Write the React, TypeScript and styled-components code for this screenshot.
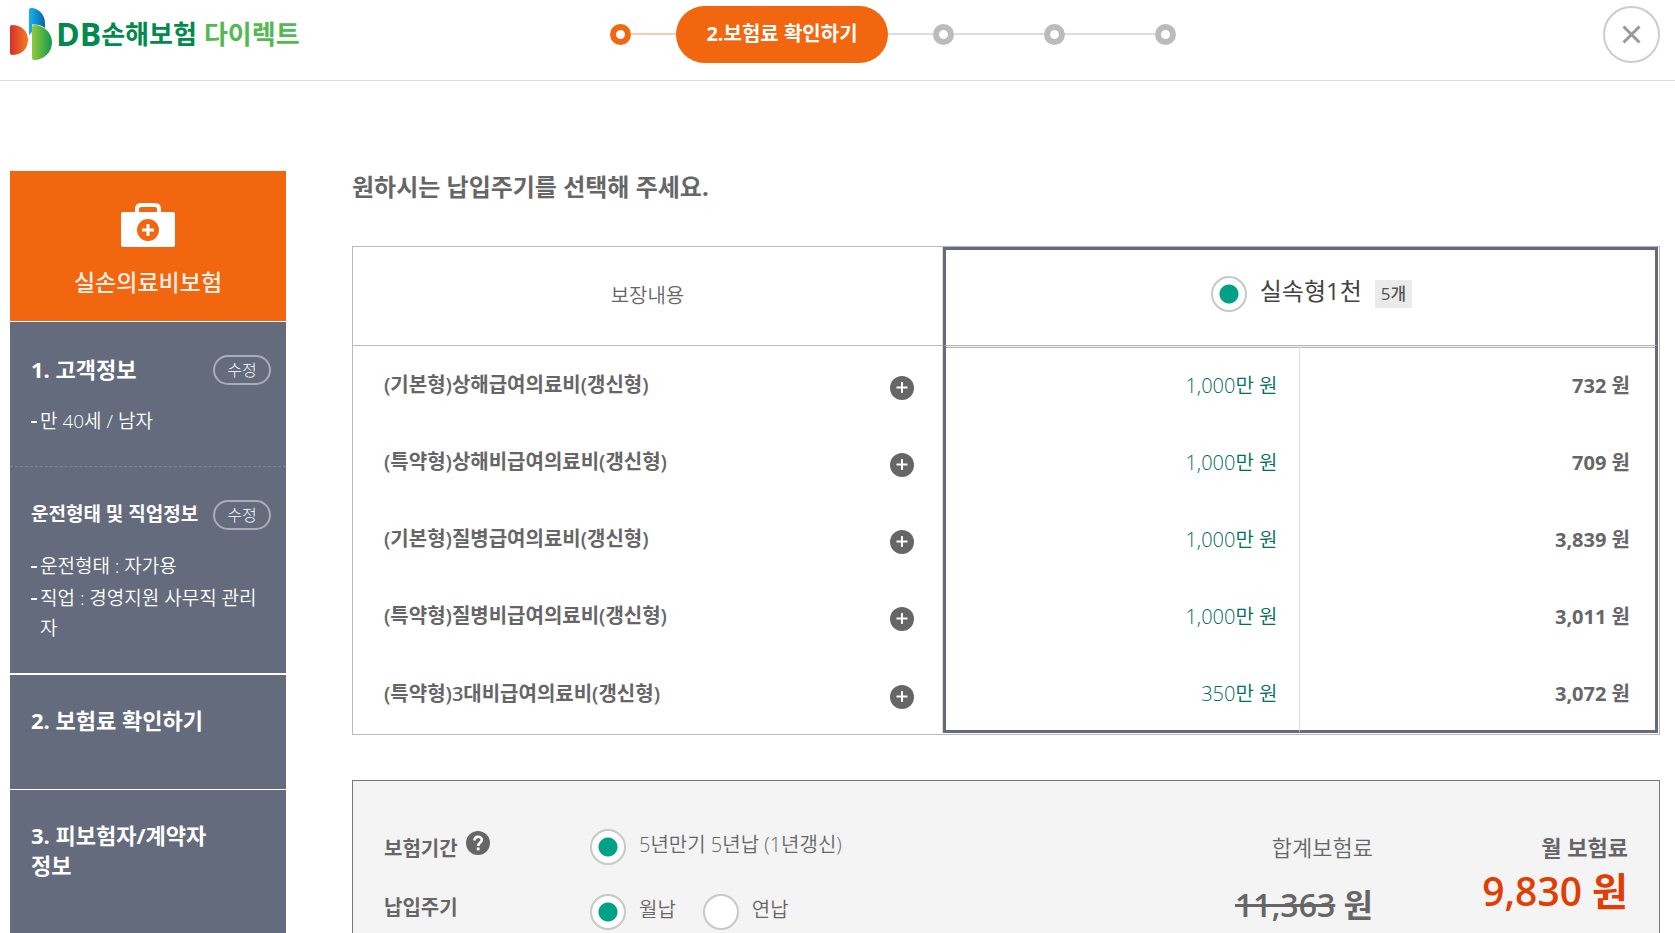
import React from "react";
import styled, { createGlobalStyle, css } from "styled-components";

const color = {
  orange: "#f1660f",
  slate: "#636b7d",
  text: "#666",
  line: "#b9b9b9",
  lightLine: "#ddd",
  green: "#00a185",
};

const GlobalStyle = createGlobalStyle`
  *, *::before, *::after { box-sizing: border-box; }
  html { scrollbar-width: none; }
  body {
    margin: 0;
    background: #fff;
    color: ${color.text};
    font-family: "Open Sans", "Noto Sans CJK KR", sans-serif;
    font-size: 20px;
    line-height: 30px;
  }
  h1, h2, h3, p, ul, ol { margin: 0; padding: 0; }
  ul, ol { list-style: none; }
  button { font-family: inherit; cursor: pointer; }
`;

const Header = styled.header`
  display: flex;
  align-items: center;
  height: 81px;
  padding: 0 15px 12px 10px;
  border-bottom: 1px solid ${color.lightLine};
`;

const Logo = styled.a`
  display: flex;
  align-items: center;
  flex: 0 0 600px;
  color: #008a4b;
  font-size: 26px;
  font-weight: 700;
  text-decoration: none;
  svg { margin-right: 3px; }
`;

const LogoInitials = styled.span`
  font-size: 32px;
`;

const LogoDirect = styled.span`
  margin-left: 7px;
  color: #53b951;
`;

const Steps = styled.ol`
  display: flex;
  align-items: center;
`;

const StepLine = styled.li<{ $long?: boolean; $done?: boolean }>`
  width: ${(p) => (p.$long ? 90 : 45)}px;
  height: 2px;
  background: ${(p) => (p.$done ? "#ffcaa8" : color.lightLine)};
`;

const StepDot = styled.li<{ $done?: boolean }>`
  width: 21px;
  height: 21px;
  border: 6px solid ${(p) => (p.$done ? color.orange : "#bbb")};
  border-radius: 50%;
`;

const StepCurrent = styled.li`
  width: 212px;
  height: 57px;
  border-radius: 29px;
  background: ${color.orange};
  color: #fff;
  font-weight: 700;
  line-height: 56px;
  text-align: center;
`;

const CloseButton = styled.button`
  display: grid;
  place-items: center;
  width: 57px;
  height: 57px;
  margin-left: auto;
  padding: 0;
  border: 2px solid #ccc;
  border-radius: 50%;
  background: #fff;
`;

const Page = styled.div`
  display: flex;
  align-items: flex-start;
  gap: 66px;
  padding: 90px 15px 0 10px;
`;

const Sidebar = styled.aside`
  flex: 0 0 276px;
  color: #fff;
`;

const Product = styled.div`
  display: flex;
  flex-direction: column;
  align-items: center;
  gap: 20px;
  height: 150px;
  padding-top: 32px;
  background: ${color.orange};
  color: #fff0e6;
  font-size: 23px;
  font-weight: 500;
`;

const SideBlock = styled.section<{ $gap?: number; $height: number; $dashed?: boolean }>`
  min-height: ${(p) => p.$height}px;
  margin-top: ${(p) => p.$gap ?? 0}px;
  padding: 30px 15px 0 21px;
  background: ${color.slate};
  ${(p) => p.$dashed && css`border-top: 1px dashed #7f8797;`}
`;

const SideHead = styled.div`
  display: flex;
  align-items: center;
  justify-content: space-between;
  padding-top: 2px;
`;

const SideTitle = styled.h2<{ $small?: boolean }>`
  padding-bottom: 2px;
  font-size: ${(p) => (p.$small ? 19 : 22)}px;
  font-weight: 700;
`;

const StepTitle = styled(SideTitle)`
  padding-right: 50px;
`;

const EditButton = styled.button`
  width: 58px;
  height: 30px;
  padding: 0;
  border: 2px solid #a9adb6;
  border-radius: 15px;
  background: transparent;
  color: #fff;
  font-size: 16px;
  font-weight: 300;
  line-height: 26px;
`;

const SideList = styled.ul`
  display: grid;
  gap: 2px;
  margin-top: 20px;
  font-size: 19px;
  font-weight: 350;
  li { display: flex; }
  li::before {
    content: "";
    flex: 0 0 6px;
    height: 2px;
    margin: 15px 3px 0 0;
    background: #fff;
  }
`;

const Main = styled.main`
  flex: 1;
  min-width: 0;
`;

const PageTitle = styled.h1`
  margin-bottom: 43px;
  font-size: 24px;
  font-weight: 700;
  line-height: 32px;
`;

const CoverTable = styled.table`
  width: 100%;
  padding: 0 1px 1px 0;
  border: 1px solid ${color.line};
  border-collapse: separate;
  border-spacing: 0;
  table-layout: fixed;
`;

const HeadCell = styled.th<{ $plan?: boolean }>`
  height: 99px;
  padding: 0;
  border-bottom: 1px solid ${color.line};
  font-weight: 350;
  ${(p) =>
    p.$plan
      ? css`
          border-top: 3px solid ${color.slate};
          border-left: 3px solid ${color.slate};
          border-right: 3px solid ${color.slate};
        `
      : css`border-right: 1px solid ${color.lightLine};`}
`;

const rowCell = css`
  height: 77px;
  tr:last-child > & { height: 79px; }
`;

const NameCell = styled.th`
  ${rowCell}
  padding: 0;
  border-right: 1px solid ${color.lightLine};
  font-weight: 600;
  text-align: left;
`;

const NameRow = styled.div`
  display: flex;
  align-items: flex-end;
  justify-content: space-between;
  padding: 0 28px 0 31px;
`;

const planCell = css`
  ${rowCell}
  text-align: right;
  tr:first-child > & { box-shadow: inset 0 1px #eee, inset 0 2px ${color.line}; }
  tr:last-child > & { border-bottom: 3px solid ${color.slate}; }
`;

const AmountCell = styled.td`
  ${planCell}
  padding: 3px 22px 0 0;
  border-left: 3px solid ${color.slate};
  border-right: 1px solid ${color.lightLine};
  color: #006e60;
  font-weight: 350;
`;

const PriceCell = styled.td`
  ${planCell}
  padding: 3px 25px 0 0;
  border-right: 3px solid ${color.slate};
  font-weight: 700;
`;

const IconButton = styled.button`
  display: block;
  width: 24px;
  height: 24px;
  padding: 0;
  border: 0;
  background: none;
  svg { display: block; }
`;

const RadioLabel = styled.label<{ $large?: boolean }>`
  display: flex;
  align-items: center;
  gap: 13px;
  font-weight: 350;
  span { padding-bottom: 5px; }
  ${(p) => p.$large && css`color: #444; font-size: 24px; font-weight: 400;`}
`;

const Radio = styled.input.attrs({ type: "radio" })`
  appearance: none;
  width: 36px;
  height: 36px;
  margin: 0;
  border: 2px solid #c8c8c8;
  border-radius: 50%;
  background: #fff;
  &:checked { background: radial-gradient(circle, ${color.green} 9px, #fff 10px); }
`;

const PlanChoice = styled.div`
  display: flex;
  align-items: center;
  justify-content: center;
  gap: 13px;
  padding: 0 0 8px 22px;
`;

const CountBadge = styled.span`
  padding: 0 6px;
  background: #ebebeb;
  color: #555;
  font-size: 17px;
  font-weight: 500;
  line-height: 28px;
`;

const Summary = styled.section`
  display: flex;
  justify-content: space-between;
  min-height: 240px;
  margin-top: 45px;
  padding: 48px 31px 40px;
  border: 1px solid #777;
  background: #f4f4f4;
`;

const Options = styled.div`
  display: grid;
  gap: 29px;
  align-content: start;
`;

const OptionRow = styled.div`
  display: flex;
`;

const OptionName = styled.div<{ $withHelp?: boolean }>`
  display: flex;
  align-items: flex-start;
  gap: 8px;
  width: 206px;
  padding-top: ${(p) => (p.$withHelp ? 6 : 0)}px;
  font-weight: 600;
  line-height: 28px;
  ${IconButton} { margin-top: -4px; }
`;

const Choices = styled.div`
  display: flex;
  gap: 27px;
`;

const Totals = styled.div`
  display: flex;
  text-align: right;
`;

const Total = styled.div<{ $main?: boolean }>`
  width: ${(p) => (p.$main ? 255 : 180)}px;
  font-size: 22px;
  font-weight: ${(p) => (p.$main ? 600 : 350)};
  line-height: 36px;
`;

const OldPrice = styled.p`
  padding-top: 14px;
  font-size: 32px;
  font-weight: 600;
  line-height: 52px;
  s { text-decoration-thickness: 3px; }
`;

const NewPrice = styled.p`
  color: #e03e04;
  font-size: 39px;
  font-weight: 600;
  line-height: 52px;
`;

function LogoMark() {
  return (
    <svg width="43" height="52" viewBox="0 0 43 52" aria-hidden="true">
      <defs>
        <linearGradient id="red"><stop offset="0" stopColor="#d5302f" /><stop offset="1" stopColor="#f47b20" /></linearGradient>
        <linearGradient id="blue"><stop offset="0" stopColor="#16b4ec" /><stop offset="1" stopColor="#0b62b0" /></linearGradient>
        <linearGradient id="green"><stop offset="0" stopColor="#96c93d" /><stop offset="1" stopColor="#0f9a4c" /></linearGradient>
      </defs>
      <path d="M0 19Q0 17 2 17C11 17 18 23 18 32S11 47 2 47Q0 47 0 45Z" fill="url(#red)" />
      <path d="M19 2Q19 0 21 0C29 0 35 7 35 15V20C32 17.500 28 16 22 16.500V24L19 27Z" fill="url(#blue)" />
      <path d="M22 19Q22 17 24 17C34 17 42 25 42 34.500S34 52 24 52Q22 52 22 50Z" fill="url(#green)" />
    </svg>
  );
}

function MedicalBag() {
  return (
    <svg width="54" height="44" viewBox="0 0 54 44" aria-hidden="true">
      <path d="M16 10V6Q16 2 20 2H34Q38 2 38 6V10" fill="none" stroke="#fff" strokeWidth="4" />
      <rect y="9" width="54" height="35" rx="2" fill="#fff" />
      <circle cx="27" cy="27" r="11" fill={color.orange} />
      <path d="M27 21V33M21 27H33" stroke="#fff" strokeWidth="3" />
    </svg>
  );
}

function PlusIcon() {
  return (
    <svg width="24" height="24" viewBox="0 0 24 24" aria-hidden="true">
      <circle cx="12" cy="12" r="12" fill="#666" />
      <path d="M12 6V17M6.500 11.500H17.500" stroke="#fff" strokeWidth="2" />
    </svg>
  );
}

function HelpIcon() {
  return (
    <svg width="24" height="24" viewBox="0 0 24 24" aria-hidden="true">
      <circle cx="12" cy="12" r="12" fill="#666" />
      <path d="M8.500 9.500C8.500 4.500 15.800 4.700 15.800 9C15.800 11.500 12.200 11.800 12.200 15" fill="none" stroke="#fff" strokeWidth="2.600" />
      <rect x="10.800" y="16.500" width="2.800" height="2.800" fill="#fff" />
    </svg>
  );
}

const covers = [
  { name: "(기본형)상해급여의료비(갱신형)", amount: "1,000만 원", price: "732 원" },
  { name: "(특약형)상해비급여의료비(갱신형)", amount: "1,000만 원", price: "709 원" },
  { name: "(기본형)질병급여의료비(갱신형)", amount: "1,000만 원", price: "3,839 원" },
  { name: "(특약형)질병비급여의료비(갱신형)", amount: "1,000만 원", price: "3,011 원" },
  { name: "(특약형)3대비급여의료비(갱신형)", amount: "350만 원", price: "3,072 원" },
];

export default function App() {
  return (
    <>
      <GlobalStyle />
      <Header>
        <Logo href="#">
          <LogoMark />
          <LogoInitials>DB</LogoInitials>
          <span>손해보험</span>
          <LogoDirect>다이렉트</LogoDirect>
        </Logo>
        <Steps>
          <StepDot $done />
          <StepLine $done />
          <StepCurrent aria-current="step">2.보험료 확인하기</StepCurrent>
          <StepLine />
          <StepDot />
          <StepLine $long />
          <StepDot />
          <StepLine $long />
          <StepDot />
        </Steps>
        <CloseButton aria-label="닫기">
          <svg width="19" height="19" viewBox="0 0 19 19" aria-hidden="true">
            <path d="M1.500 1.500L17.500 17.500M17.500 1.500L1.500 17.500" stroke="#999" strokeWidth="3" />
          </svg>
        </CloseButton>
      </Header>

      <Page>
        <Sidebar>
          <Product>
            <MedicalBag />
            <span>실손의료비보험</span>
          </Product>
          <SideBlock $gap={1} $height={144}>
            <SideHead>
              <SideTitle>1. 고객정보</SideTitle>
              <EditButton>수정</EditButton>
            </SideHead>
            <SideList>
              <li>만 40세 / 남자</li>
            </SideList>
          </SideBlock>
          <SideBlock $height={207} $dashed>
            <SideHead>
              <SideTitle $small>운전형태 및 직업정보</SideTitle>
              <EditButton>수정</EditButton>
            </SideHead>
            <SideList>
              <li>운전형태 : 자가용</li>
              <li>직업 : 경영지원 사무직 관리자</li>
            </SideList>
          </SideBlock>
          <SideBlock $gap={2} $height={114}>
            <StepTitle>2. 보험료 확인하기</StepTitle>
          </SideBlock>
          <SideBlock $gap={1} $height={240}>
            <StepTitle>3. 피보험자/계약자 정보</StepTitle>
          </SideBlock>
        </Sidebar>

        <Main>
          <PageTitle>원하시는 납입주기를 선택해 주세요.</PageTitle>
          <CoverTable>
            <colgroup>
              <col width="45.2%" />
              <col />
              <col />
            </colgroup>
            <thead>
              <tr>
                <HeadCell scope="col">보장내용</HeadCell>
                <HeadCell scope="col" colSpan={2} $plan>
                  <PlanChoice>
                    <RadioLabel $large>
                      <Radio name="plan" defaultChecked />
                      <span>실속형1천</span>
                    </RadioLabel>
                    <CountBadge>5개</CountBadge>
                  </PlanChoice>
                </HeadCell>
              </tr>
            </thead>
            <tbody>
              {covers.map((cover) => (
                <tr key={cover.name}>
                  <NameCell scope="row">
                    <NameRow>
                      {cover.name}
                      <IconButton aria-label="자세히 보기">
                        <PlusIcon />
                      </IconButton>
                    </NameRow>
                  </NameCell>
                  <AmountCell>{cover.amount}</AmountCell>
                  <PriceCell>{cover.price}</PriceCell>
                </tr>
              ))}
            </tbody>
          </CoverTable>

          <Summary>
            <Options>
              <OptionRow>
                <OptionName $withHelp>
                  보험기간
                  <IconButton aria-label="도움말">
                    <HelpIcon />
                  </IconButton>
                </OptionName>
                <Choices>
                  <RadioLabel>
                    <Radio name="period" defaultChecked />
                    <span>5년만기 5년납 (1년갱신)</span>
                  </RadioLabel>
                </Choices>
              </OptionRow>
              <OptionRow>
                <OptionName>납입주기</OptionName>
                <Choices>
                  <RadioLabel>
                    <Radio name="cycle" defaultChecked />
                    <span>월납</span>
                  </RadioLabel>
                  <RadioLabel>
                    <Radio name="cycle" />
                    <span>연납</span>
                  </RadioLabel>
                </Choices>
              </OptionRow>
            </Options>
            <Totals>
              <Total>
                합계보험료
                <OldPrice>
                  <s>11,363</s> 원
                </OldPrice>
              </Total>
              <Total $main>
                월 보험료
                <NewPrice>9,830 원</NewPrice>
              </Total>
            </Totals>
          </Summary>
        </Main>
      </Page>
    </>
  );
}
